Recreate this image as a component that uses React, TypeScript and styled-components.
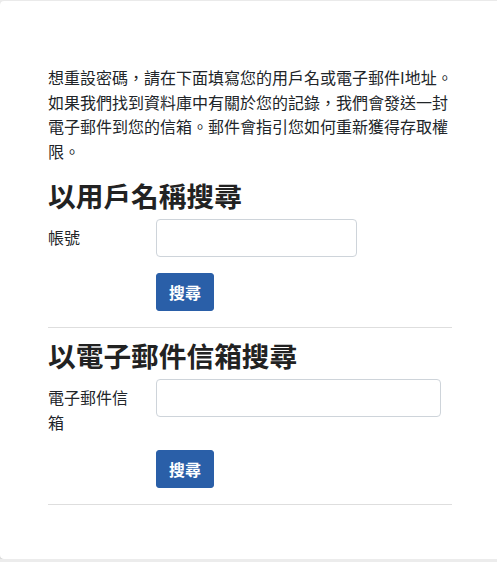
import React from 'react'
import styled, { createGlobalStyle } from 'styled-components'

const GlobalStyle = createGlobalStyle`
  html, body {
    margin: 0;
    padding: 0;
    background: #ececec;
  }
  body {
    font-family: "Noto Sans CJK TC", "Noto Sans", sans-serif;
    color: #212529;
    text-spacing-trim: space-all;
  }
  * { box-sizing: border-box; }
`;

const Card = styled.div`
  margin-top: 1px;
  width: 520px;
  height: 558px;
  background: #fff;
  border-radius: 4px 0 0 4px;
  box-shadow: 0 1px 2px rgba(0, 0, 0, 0.18);
  padding: 64px 0 0 48px;
`;

const Content = styled.div`
  width: 404px;
`;

const Intro = styled.p`
  margin: 0 -10px 15px 0;
  font-size: 16px;
  line-height: 24.6px;
`;

const Heading = styled.h2`
  margin: 0 0 7px;
  font-size: 27.7px;
  line-height: 34px;
  font-weight: 700;
  color: #222;
`;

const FormRow = styled.div`
  display: grid;
  grid-template-columns: 108px 1fr;
  align-items: start;
  margin-bottom: 16px;
`;

const Label = styled.label`
  padding-top: 6px;
  padding-right: 20px;
  font-size: 16px;
  line-height: 24.5px;
`;

const Input = styled.input<{ $width: number }>`
  width: ${p => p.$width}px;
  height: 38px;
  border: 1px solid #ced4da;
  border-radius: 4px;
  padding: 6px 12px;
  font-size: 16px;
  outline: none;
`;

const Button = styled.button`
  height: 38px;
  padding: 0 12px;
  background: #2a5fa8;
  border: 1px solid #2a5fa8;
  border-radius: 3px;
  color: #fff;
  font-family: inherit;
  font-size: 16px;
  font-weight: 700;
  cursor: pointer;
`;

const Divider = styled.hr`
  margin: 0 0 10px;
  border: 0;
  border-top: 1px solid #dedede;
`;

export default function App() {
  return <>
    <GlobalStyle/>
    <Card>
      <Content>
        <Intro>
          想重設密碼，請在下面填寫您的用戶名或電子郵件I地址。如果我們找到資料庫中有關於您的記錄，我們會發送一封電子郵件到您的信箱。郵件會指引您如何重新獲得存取權限。
        </Intro>

        <Heading>以用戶名稱搜尋</Heading>
        <FormRow>
          <Label>帳號</Label>
          <Input $width={201} type='text'/>
        </FormRow>
        <FormRow>
          <span/>
          <div><Button>搜尋</Button></div>
        </FormRow>
        <Divider/>

        <Heading>以電子郵件信箱搜尋</Heading>
        <FormRow>
          <Label>電子郵件信箱</Label>
          <Input $width={285} type='text'/>
        </FormRow>
        <FormRow>
          <span/>
          <div><Button>搜尋</Button></div>
        </FormRow>
        <Divider/>
      </Content>
    </Card>
  </>
}
